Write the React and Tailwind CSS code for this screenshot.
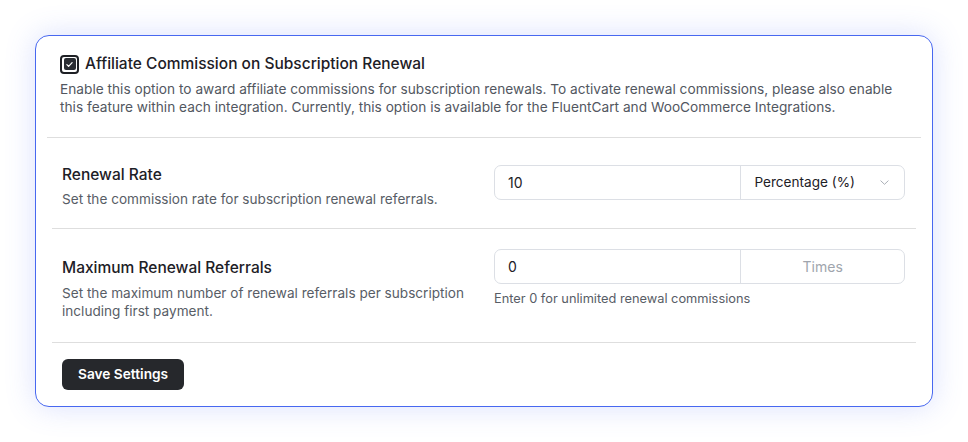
import { useState } from "react";

function Checkbox({ checked, onChange }) {
  return (
    <button
      type="button"
      onClick={() => onChange(!checked)}
      className="flex h-[19px] w-[19px] shrink-0 items-center justify-center rounded-[4px] border-2 border-[#1e2025] p-[1.5px]"
    >
      {checked && (
        <span className="flex h-full w-full items-center justify-center rounded-[2px] bg-[#2a2d33]">
          <svg viewBox="0 0 12 12" className="h-[9px] w-[9px]" fill="none" stroke="white" strokeWidth="1.6" strokeLinecap="round" strokeLinejoin="round">
            <path d="M2.5 6.2l2.3 2.3L9.5 3.5" />
          </svg>
        </span>
      )}
    </button>
  );
}

function Chevron() {
  return (
    <svg viewBox="0 0 12 12" className="h-[11px] w-[11px]" fill="none" stroke="#a3a8b0" strokeWidth="1" strokeLinecap="round" strokeLinejoin="round">
      <path d="M2 4.2l4 3.8 4-3.8" />
    </svg>
  );
}

export default function App() {
  const [enabled, setEnabled] = useState(true);
  const [rate, setRate] = useState("10");
  const [maxReferrals, setMaxReferrals] = useState("0");

  return (
    <div className="min-h-[442px] bg-white pl-[35px] pt-[35px]" style={{ fontFamily: "Inter, 'Noto Sans', sans-serif" }}>
      <div className="w-[898px] rounded-[14px] border border-[#4868f0] bg-white px-[11px] shadow-[0_0_30px_rgba(88,112,245,0.22)]">
        <div className="border-b border-[#dedede] px-[13px] pb-[21px] pt-[16px]">
          <label className="flex h-[24px] items-center gap-[6px]">
            <Checkbox checked={enabled} onChange={setEnabled} />
            <span className="text-[15.5px] font-medium text-[#1d2026]">Affiliate Commission on Subscription Renewal</span>
          </label>
          <p className="mt-[4px] whitespace-nowrap text-[13.7px] leading-[18px] text-[#52575f]">
            Enable this option to award affiliate commissions for subscription renewals. To activate renewal commissions, please also enable
            <br />
            this feature within each integration. Currently, this option is available for the FluentCart and WooCommerce Integrations.
          </p>
        </div>

        <div className="mx-[5px]">
          <div className="grid grid-cols-[1fr_411px] gap-[20px] border-b border-[#dedede] pb-[20px] pl-[10px] pr-[11px] pt-[26px]">
            <div>
              <h3 className="text-[15.5px] font-medium leading-[22px] text-[#1d2026]">Renewal Rate</h3>
              <p className="mt-[4px] text-[13.6px] leading-[18px] text-[#585d66]">Set the commission rate for subscription renewal referrals.</p>
            </div>
            <div className="mt-[1px] flex h-[35px] rounded-[7px] border border-[#dcdfe5]">
              <input
                value={rate}
                onChange={(event) => setRate(event.target.value)}
                className="w-[60%] rounded-l-[7px] px-[13px] text-[14px] text-[#1d2026] outline-none"
              />
              <div className="flex flex-1 items-center justify-between border-l border-[#dcdfe5] pl-[13px] pr-[14px] text-[13.6px] text-[#1d2026]">
                <span>Percentage (%)</span>
                <Chevron />
              </div>
            </div>
          </div>

          <div className="grid grid-cols-[1fr_411px] gap-[20px] border-b border-[#dedede] pb-[22px] pl-[10px] pr-[11px] pt-[20px]">
            <div className="pt-[8px]">
              <h3 className="text-[15.5px] font-medium leading-[22px] text-[#1d2026]">Maximum Renewal Referrals</h3>
              <p className="mt-[5px] text-[13.6px] leading-[18px] text-[#585d66]">
                Set the maximum number of renewal referrals per subscription including first payment.
              </p>
            </div>
            <div>
              <div className="flex h-[35px] rounded-[7px] border border-[#dcdfe5]">
                <input
                  value={maxReferrals}
                  onChange={(event) => setMaxReferrals(event.target.value)}
                  className="w-[60%] rounded-l-[7px] px-[13px] text-[14px] text-[#1d2026] outline-none"
                />
                <div className="flex flex-1 items-center justify-center border-l border-[#dcdfe5] text-[14px] text-[#a0a5ad]">Times</div>
              </div>
              <p className="mt-[6px] text-[12.8px] leading-[18px] text-[#585d66]">Enter 0 for unlimited renewal commissions</p>
            </div>
          </div>

          <div className="px-[10px] pb-[16px] pt-[16px]">
            <button className="h-[31px] rounded-[6px] bg-[#26282c] px-[16px] text-[13.7px] font-semibold text-white">Save Settings</button>
          </div>
        </div>
      </div>
    </div>
  );
}
